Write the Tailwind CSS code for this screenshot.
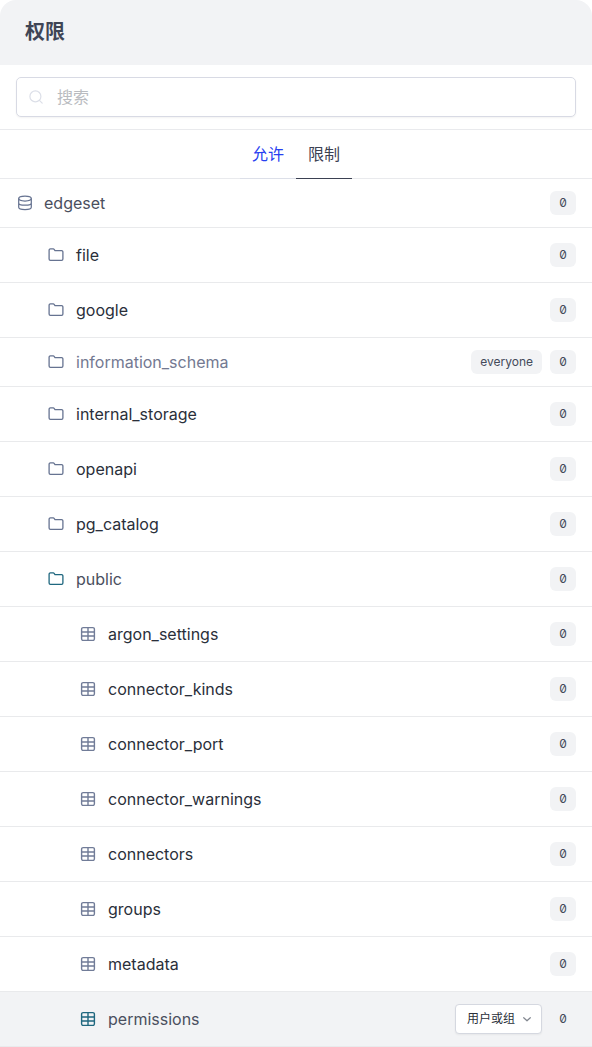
<!DOCTYPE html>
<html lang="zh-CN">
<head>
<meta charset="utf-8">
<meta name="viewport" content="width=device-width, initial-scale=1">
<title>权限</title>
<script src="https://cdn.jsdelivr.net/npm/@tailwindcss/browser@4"></script>
</head>
<body class="bg-white font-['Inter','Noto_Sans_CJK_SC',sans-serif] text-base text-[#2a2f3a]">
<svg class="hidden" aria-hidden="true">
  <symbol id="folder" viewBox="0 0 16 16"><path d="M1.1 12V3.2a1.3 1.3 0 0 1 1.3-1.3h2.9a1 1 0 0 1 .8.4l.9 1.3h6.6a1.3 1.3 0 0 1 1.3 1.3V12a1.3 1.3 0 0 1-1.3 1.3H2.4A1.3 1.3 0 0 1 1.1 12z" fill="none" stroke="currentColor" stroke-width="1.3" stroke-linejoin="round"/></symbol>
  <symbol id="table" viewBox="0 0 16 16"><path d="M3.1 1.65h9.8a1.5 1.5 0 0 1 1.5 1.5v9.7a1.5 1.5 0 0 1-1.5 1.5H3.1a1.5 1.5 0 0 1-1.5-1.5v-9.7a1.5 1.5 0 0 1 1.5-1.5zM1.6 6h12.8M1.6 10h12.8M8 1.65v12.7" fill="none" stroke="currentColor" stroke-width="1.4"/></symbol>
</svg>
<main class="overflow-hidden rounded-t-2xl">
  <header class="bg-[#f2f3f5] px-[25px] pt-[17px] pb-[18px]">
    <h1 class="text-xl leading-[30px] font-bold text-[#3f4555]">权限</h1>
  </header>
  <form class="border-b border-[#e9eaed] px-4 py-3" role="search">
    <label class="flex h-10 items-center gap-3 rounded-[5px] border border-[#d8dae4] bg-white px-3 shadow-xs">
      <svg class="size-4 shrink-0 text-[#dcdfe8]" viewBox="0 0 16 16" fill="none" stroke="currentColor" stroke-width="1.2" stroke-linecap="round" aria-hidden="true"><circle cx="6.4" cy="7.4" r="5.5"/><path d="M10.4 11.4l2.8 2.8"/></svg>
      <input type="search" aria-label="搜索" placeholder="搜索" class="min-w-0 flex-1 bg-transparent outline-none placeholder:text-[#b9bbc0]">
    </label>
  </form>
  <nav class="flex justify-center border-b border-[#e9eaed]" role="tablist">
    <button role="tab" aria-selected="false" class="-mb-px h-[49px] border-b border-[#dcdfe8] px-3 text-[#2740f0]">允许</button>
    <button role="tab" aria-selected="true" class="-mb-px h-[49px] border-b border-[#3b4152] px-3 text-[#3b4152]">限制</button>
  </nav>
  <ul class="[&>li]:flex [&>li]:items-center [&>li]:gap-3 [&>li]:border-b [&>li]:border-[#e9eaec] [&>li]:pr-4 [&_b]:flex [&_b]:h-6 [&_b]:w-[26px] [&_b]:items-center [&_b]:justify-center [&_b]:rounded-md [&_b]:bg-[#f2f3f5] [&_b]:text-xs [&_b]:font-normal [&_b]:slashed-zero [&_b]:text-[#444a5a] [&_span]:flex-1 [&_svg]:size-4 [&_svg]:shrink-0">
    <li class="h-[49px] pl-4 text-[#4a4f5e]"><svg class="text-[#667391]" viewBox="0 0 16 16" fill="none" stroke="currentColor" stroke-width="1.25" aria-hidden="true"><ellipse cx="9" cy="3.6" rx="6.3" ry="2.4"/><path d="M2.7 3.6v8.7c0 1.3 2.8 2.3 6.3 2.3s6.3-1 6.3-2.3V3.6M2.7 7.9c0 1.3 2.8 2.3 6.3 2.3s6.3-1 6.3-2.3"/></svg><span>edgeset</span><b>0</b></li>
    <li class="h-[55px] pl-12"><svg class="text-[#667391]" aria-hidden="true"><use href="#folder"/></svg><span>file</span><b>0</b></li>
    <li class="h-[55px] pl-12"><svg class="text-[#667391]" aria-hidden="true"><use href="#folder"/></svg><span>google</span><b>0</b></li>
    <li class="h-[49px] pl-12 text-[#737991]"><svg class="text-[#667391]" aria-hidden="true"><use href="#folder"/></svg><span>information_schema</span><div class="flex gap-2"><div class="flex h-6 items-center rounded-md bg-[#f2f3f5] px-[9px] text-xs text-[#444a5a]">everyone</div><b>0</b></div></li>
    <li class="h-[55px] pl-12"><svg class="text-[#667391]" aria-hidden="true"><use href="#folder"/></svg><span>internal_storage</span><b>0</b></li>
    <li class="h-[55px] pl-12"><svg class="text-[#667391]" aria-hidden="true"><use href="#folder"/></svg><span>openapi</span><b>0</b></li>
    <li class="h-[55px] pl-12"><svg class="text-[#667391]" aria-hidden="true"><use href="#folder"/></svg><span>pg_catalog</span><b>0</b></li>
    <li class="h-[55px] pl-12 text-[#4a4f5e]"><svg class="text-[#1f677f]" aria-hidden="true"><use href="#folder"/></svg><span>public</span><b>0</b></li>
    <li class="h-[55px] pl-20"><svg class="text-[#717c98]" aria-hidden="true"><use href="#table"/></svg><span>argon_settings</span><b>0</b></li>
    <li class="h-[55px] pl-20"><svg class="text-[#717c98]" aria-hidden="true"><use href="#table"/></svg><span>connector_kinds</span><b>0</b></li>
    <li class="h-[55px] pl-20"><svg class="text-[#717c98]" aria-hidden="true"><use href="#table"/></svg><span>connector_port</span><b>0</b></li>
    <li class="h-[55px] pl-20"><svg class="text-[#717c98]" aria-hidden="true"><use href="#table"/></svg><span>connector_warnings</span><b>0</b></li>
    <li class="h-[55px] pl-20"><svg class="text-[#717c98]" aria-hidden="true"><use href="#table"/></svg><span>connectors</span><b>0</b></li>
    <li class="h-[55px] pl-20"><svg class="text-[#717c98]" aria-hidden="true"><use href="#table"/></svg><span>groups</span><b>0</b></li>
    <li class="h-[55px] pl-20"><svg class="text-[#717c98]" aria-hidden="true"><use href="#table"/></svg><span>metadata</span><b>0</b></li>
    <li class="h-[55px] bg-[#f2f3f5] pl-20 text-[#4a4f5e]"><svg class="text-[#1f677f]" aria-hidden="true"><use href="#table"/></svg><span>permissions</span>
      <div class="flex items-center gap-2">
        <div class="relative">
          <select aria-label="用户或组" class="block h-[30px] w-[87px] appearance-none rounded-[4px] border border-[#d5d8e0] bg-white pl-[11px] text-xs text-[#2a2f3a] shadow-xs"><option>用户或组</option></select>
          <svg class="pointer-events-none absolute top-[7px] right-[7px] text-[#81868f]" viewBox="0 0 16 16" fill="none" stroke="currentColor" stroke-width="1.2" stroke-linecap="round" stroke-linejoin="round" aria-hidden="true"><path d="M4.7 6.7L8 9.8l3.3-3.1"/></svg>
        </div>
        <b>0</b>
      </div>
    </li>
  </ul>
</main>
</body>
</html>
